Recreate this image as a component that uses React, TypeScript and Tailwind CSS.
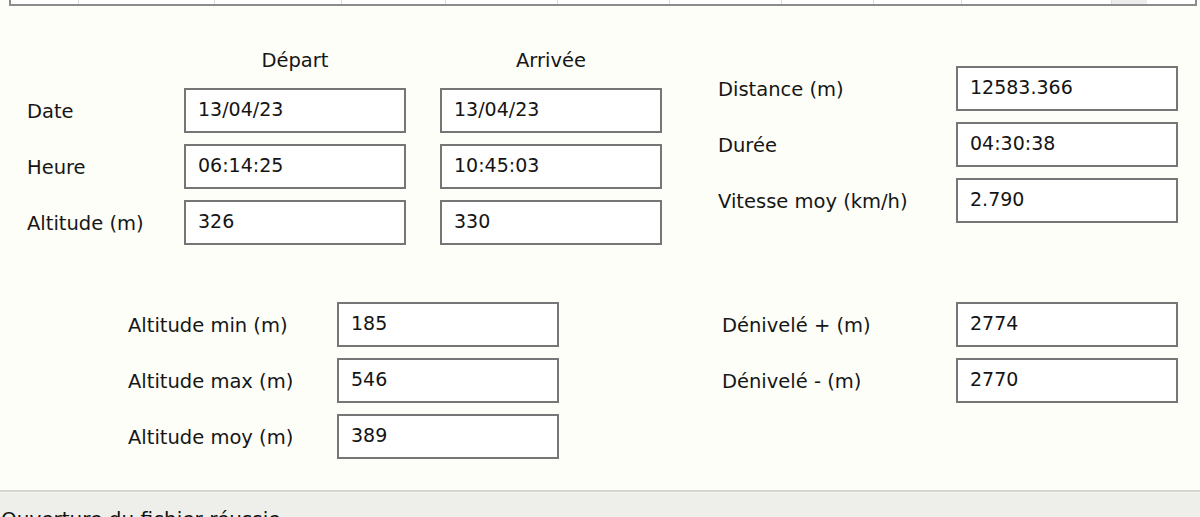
const Field = ({ value, className = "" }: { value: string; className?: string }) => (
  <div className={`h-[45px] w-[222px] border-2 border-[#767676] bg-white pl-[12px] pb-[3px] flex items-center text-[19px] text-[#141414] ${className}`}>
    {value}
  </div>
);

const Label = ({ text }: { text: string }) => (
  <div className="h-[45px] flex items-center pt-[3px] text-[19.5px] text-[#161616]">{text}</div>
);

const App = () => {
  const startEnd = [
    { label: "Date", start: "13/04/23", end: "13/04/23" },
    { label: "Heure", start: "06:14:25", end: "10:45:03" },
    { label: "Altitude (m)", start: "326", end: "330" },
  ];

  const summary = [
    { label: "Distance (m)", value: "12583.366" },
    { label: "Durée", value: "04:30:38" },
    { label: "Vitesse moy (km/h)", value: "2.790" },
  ];

  const altitudes = [
    { label: "Altitude min (m)", value: "185" },
    { label: "Altitude max (m)", value: "546" },
    { label: "Altitude moy (m)", value: "389" },
  ];

  const elevation = [
    { label: "Dénivelé + (m)", value: "2774" },
    { label: "Dénivelé - (m)", value: "2770" },
  ];

  const columns = [68, 136, 127, 104, 112, 112, 112, 92, 88, 150, 35];

  return (
    <div className="w-[1200px] h-[517px] overflow-hidden bg-[#fdfef8] flex flex-col font-['DejaVu_Sans',Verdana,sans-serif]">
      {/* list header remnant */}
      <div className="h-[6px] ml-[9px] mr-[3px] flex border-x-2 border-b-2 border-[#8c8c8c] bg-white">
        {columns.map((w, i) => (
          <div key={i} style={{ width: w }} className="h-full border-r border-[#dcdcdc] last:border-r-0 last:bg-[#ececec]" />
        ))}
      </div>

      {/* start / end + summary */}
      <div className="flex items-start">
        <div className="w-[718px] pl-[27px] pt-[43px]">
          <div className="grid grid-cols-[157px_222px_256px]">
            <div />
            <div className="h-[24px] text-center text-[19.5px] leading-[24px] text-[#161616]">Départ</div>
            <div className="h-[24px] pl-[34px] text-center text-[19.5px] leading-[24px] text-[#161616]">Arrivée</div>
          </div>
          <div className="mt-[15px] grid grid-cols-[157px_222px_256px] gap-y-[11px]">
            {startEnd.map((row) => (
              <div key={row.label} className="contents">
                <Label text={row.label} />
                <Field value={row.start} />
                <Field value={row.end} className="ml-[34px]" />
              </div>
            ))}
          </div>
        </div>

        <div className="pt-[60px] grid grid-cols-[238px_222px] gap-y-[11px]">
          {summary.map((row) => (
            <div key={row.label} className="contents">
              <Label text={row.label} />
              <Field value={row.value} />
            </div>
          ))}
        </div>
      </div>

      {/* altitudes + elevation */}
      <div className="mt-[57px] flex items-start">
        <div className="w-[722px] pl-[128px] grid grid-cols-[209px_222px] gap-y-[11px] content-start">
          {altitudes.map((row) => (
            <div key={row.label} className="contents">
              <Label text={row.label} />
              <Field value={row.value} />
            </div>
          ))}
        </div>
        <div className="grid grid-cols-[234px_222px] gap-y-[11px]">
          {elevation.map((row) => (
            <div key={row.label} className="contents">
              <Label text={row.label} />
              <Field value={row.value} />
            </div>
          ))}
        </div>
      </div>

      <div className="flex-1" />

      {/* status bar */}
      <div className="h-[27px] shrink-0 border-t-2 border-[#d6d6d0] bg-[#eeefea]">
        <div className="border-t border-[#f6f6f2] pl-[1px] pt-[14px] text-[20px] leading-[24px] text-[#111] whitespace-nowrap">
          Ouverture du fichier réussie
        </div>
      </div>
    </div>
  );
};

export default App;
